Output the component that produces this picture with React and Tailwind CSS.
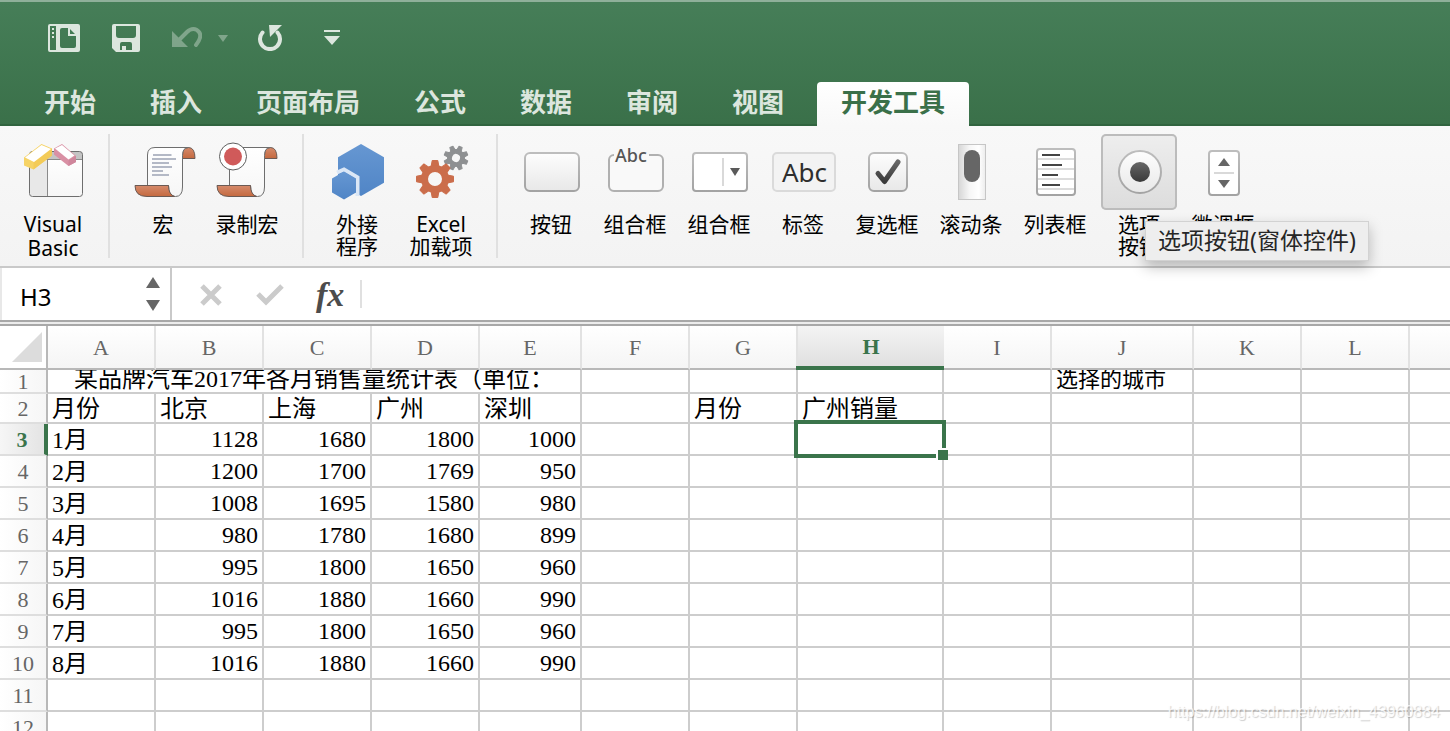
import React, { useState } from 'react';
import clsx from 'clsx';

const SANS = "font-['Noto_Sans','Noto_Sans_CJK_SC',sans-serif]";
const SERIF = "font-['Liberation_Serif','Noto_Sans_CJK_SC',serif]";

const TABS = ['开始', '插入', '页面布局', '公式', '数据', '审阅', '视图', '开发工具'];

const COLUMNS = [
  { name: 'A', width: 'w-[108px]' },
  { name: 'B', width: 'w-[108px]' },
  { name: 'C', width: 'w-[108px]' },
  { name: 'D', width: 'w-[108px]' },
  { name: 'E', width: 'w-[102px]' },
  { name: 'F', width: 'w-[108px]' },
  { name: 'G', width: 'w-[108px]' },
  { name: 'H', width: 'w-[146px]' },
  { name: 'I', width: 'w-[108px]' },
  { name: 'J', width: 'w-[142px]' },
  { name: 'K', width: 'w-[108px]' },
  { name: 'L', width: 'w-[108px]' },
  { name: '', width: 'w-auto' },
];

const ROWS = {
  2: { A: '月份', B: '北京', C: '上海', D: '广州', E: '深圳', G: '月份', H: '广州销量' },
  3: { A: '1月', B: 1128, C: 1680, D: 1800, E: 1000 },
  4: { A: '2月', B: 1200, C: 1700, D: 1769, E: 950 },
  5: { A: '3月', B: 1008, C: 1695, D: 1580, E: 980 },
  6: { A: '4月', B: 980, C: 1780, D: 1680, E: 899 },
  7: { A: '5月', B: 995, C: 1800, D: 1650, E: 960 },
  8: { A: '6月', B: 1016, C: 1880, D: 1660, E: 990 },
  9: { A: '7月', B: 995, C: 1800, D: 1650, E: 960 },
  10: { A: '8月', B: 1016, C: 1880, D: 1660, E: 990 },
  11: {},
  12: {},
};

/* ---------- ribbon icons, all on a 76px canvas ---------- */

const Canvas = ({ children }) => (
  <svg viewBox="0 0 76 76" className="block size-[76px]" fill="none" aria-hidden="true">
    <defs>
      <linearGradient id="face" x1="0" y1="0" x2="0" y2="1">
        <stop offset="0" stopColor="#fdfdfd" />
        <stop offset="1" stopColor="#e8e8e8" />
      </linearGradient>
      <linearGradient id="paper" x1="0" y1="0" x2="0" y2="1">
        <stop offset="0" stopColor="#ffffff" />
        <stop offset="1" stopColor="#f6f6f6" />
      </linearGradient>
      <linearGradient id="rim" x1="0" y1="0" x2="0" y2="1">
        <stop offset="0" stopColor="#bdbdbd" />
        <stop offset="1" stopColor="#a3a3a3" />
      </linearGradient>
      <linearGradient id="ink" x1="0" y1="0" x2="0" y2="1">
        <stop offset="0" stopColor="#666" />
        <stop offset="1" stopColor="#3a3a3a" />
      </linearGradient>
      <linearGradient id="rust" x1="0" y1="0" x2="0" y2="1">
        <stop offset="0" stopColor="#d58a6b" />
        <stop offset="1" stopColor="#c4693f" />
      </linearGradient>
      <linearGradient id="blue" x1="0" y1="0" x2="0" y2="1">
        <stop offset="0" stopColor="#6697d2" />
        <stop offset="1" stopColor="#5085c6" />
      </linearGradient>
      <linearGradient id="track" x1="0" y1="0" x2="1" y2="0">
        <stop offset="0" stopColor="#d6d6d6" />
        <stop offset="0.4" stopColor="#f6f6f6" />
        <stop offset="0.75" stopColor="#fff" />
        <stop offset="1" stopColor="#ececec" />
      </linearGradient>
    </defs>
    {children}
  </svg>
);

const VisualBasicIcon = () => (
  <Canvas>
    <rect x="14.5" y="17.5" width="53" height="45" rx="3" fill="url(#paper)" />
    <path d="M14.5 25.5V20.5a3 3 0 0 1 3-3h47a3 3 0 0 1 3 3v5z" fill="#c4c4c4" />
    <path d="M15 25.5h17.5v36.5H17.5a3 3 0 0 1-2.5-3z" fill="#e8e8e8" />
    <path d="M32.5 25.5v37M14.5 25.5h53" stroke="#8a8a8a" />
    <rect x="14.5" y="17.5" width="53" height="45" rx="3" stroke="#6e6e6e" />
    <path d="M9 23.5 26.5 10 37 14.5v7L18.5 35.5 9 31.5z" fill="#f6d365" />
    <path d="M18.5 28v7.5L37 21.5v-7z" fill="#f3cb58" />
    <path d="M10 23.5 26.5 11 36 15 19 28z" fill="#fff" />
    <path d="M39 14.5 47 10 61 22v6l-7.5 4L39 20.5z" fill="#d990a4" />
    <path d="M53.5 26.5v5.5l7.5-4v-6z" fill="#cf869c" />
    <path d="M40 14.5 47 11l12.5 10.5-6 4z" fill="#fff" />
  </Canvas>
);

const Scroll = () => (
  <>
    <path d="M57.5 24.5V21q0-7.5 6-7.5 6.5 0 6.5 11z" fill="url(#rust)" stroke="#6b5a54" />
    <path
      d="M22.5 52V21q0-7.5 7.5-7.5h33.5q-6 0-6 8V53q0 9.5-7 9.5T43.5 51.5z"
      fill="url(#paper)"
      stroke="#6e6e6e"
    />
    <path d="M10 51.5h33.5q0 9 6 11H22q-12 0-12-11z" fill="url(#rust)" stroke="#6b5a54" />
  </>
);

const MacroIcon = () => (
  <Canvas>
    <Scroll />
    <path d="M28 21h18.5M27 25h24M27 29h17M27 33h20M27 37h11M27 41h17" stroke="#b4b9c6" strokeWidth="2" />
  </Canvas>
);

const RecordMacroIcon = () => (
  <Canvas>
    <g transform="translate(-2 0)">
      <Scroll />
    </g>
    <circle cx="24" cy="22.5" r="13.5" fill="#fff" stroke="#5e5e5e" />
    <circle cx="24" cy="22.5" r="9" fill="#d05a5a" />
  </Canvas>
);

const AddInsIcon = () => (
  <Canvas>
    <path d="m42 10 23 13.3v25.4L42 62 19 48.7V23.3z" fill="url(#blue)" />
    <path d="M18 38.5 25 35.5l13.5 8V62" stroke="#dbe7f6" strokeWidth="4" />
    <path d="m25 37.5 12 7v14l-12 7-12-7v-14z" fill="url(#blue)" />
  </Canvas>
);

const Gear = ({ cx, cy, outer, body, hole, tooth, turn, color }) => (
  <g transform={`translate(${cx} ${cy}) rotate(${turn})`}>
    {[0, 45, 90, 135, 180, 225, 270, 315].map((angle) => (
      <path
        key={angle}
        transform={`rotate(${angle})`}
        d={`M${-tooth} ${-body + 2}L${-tooth * 0.7} ${-outer}H${tooth * 0.7}L${tooth} ${-body + 2}z`}
        fill={color}
        stroke={color}
        strokeLinejoin="round"
      />
    ))}
    <circle r={(body + hole) / 2} stroke={color} strokeWidth={body - hole} />
  </g>
);

const ExcelAddInsIcon = () => (
  <Canvas>
    <Gear cx={53} cy={24} outer={12} body={9} hole={4} tooth={2.4} turn={22.5} color="#8e9092" />
    <Gear cx={32} cy={45} outer={18.5} body={14} hole={7} tooth={4} turn={0} color="#cb6d4b" />
  </Canvas>
);

const ButtonIcon = () => (
  <Canvas>
    <rect x="12" y="19" width="54" height="38" rx="5" fill="url(#face)" stroke="url(#rim)" strokeWidth="2" />
  </Canvas>
);

const GroupBoxIcon = () => (
  <Canvas>
    <rect x="12" y="21" width="54" height="36" rx="5" fill="#f9f9f9" />
    <path d="M17 21a5 5 0 0 0-5 5v26a5 5 0 0 0 5 5h44a5 5 0 0 0 5-5V26a5 5 0 0 0-5-5H52" stroke="#b0b0b0" strokeWidth="2" />
    <text x="18" y="28" className="font-['Noto_Sans',sans-serif] text-[18px] font-medium" fill="#555">Abc</text>
  </Canvas>
);

const ComboBoxIcon = () => (
  <Canvas>
    <rect x="12" y="19" width="54" height="38" rx="3" fill="#fff" stroke="url(#rim)" strokeWidth="2" />
    <path d="M42 24v28" stroke="#d9d9d9" strokeWidth="2" />
    <path d="M49 34h10l-5 8z" fill="#5a5a5a" />
  </Canvas>
);

const LabelIcon = () => (
  <Canvas>
    <rect x="8" y="19" width="62" height="38" rx="4" fill="#f3f3f3" stroke="#dadada" strokeWidth="2" />
    <text x="17" y="48" className="font-['Noto_Sans',sans-serif] text-[26px]" fill="#2e2e2e">Abc</text>
  </Canvas>
);

const CheckBoxIcon = () => (
  <Canvas>
    <rect x="20" y="19" width="38" height="38" rx="5" fill="url(#face)" stroke="url(#rim)" strokeWidth="2" />
    <path d="m29 39.5 6.5 8L49 28" stroke="url(#ink)" strokeWidth="5" strokeLinecap="round" strokeLinejoin="round" />
  </Canvas>
);

const ScrollBarIcon = () => (
  <Canvas>
    <rect x="25.5" y="10.5" width="27" height="55" fill="url(#track)" stroke="#c6c6c6" />
    <rect x="31" y="16" width="16" height="32" rx="8" fill="#666" />
  </Canvas>
);

const ListBoxIcon = () => (
  <Canvas>
    <rect x="20" y="15" width="38" height="46" rx="3" fill="#fff" stroke="url(#rim)" strokeWidth="2" />
    <path d="M21 25h36M21 35h36M21 45h36M21 55h36" stroke="#dcdcdc" strokeWidth="2" />
    <path d="M25 21h18M25 31h20M25 41h16M25 51h18" stroke="#444" strokeWidth="2" />
  </Canvas>
);

const OptionIcon = () => (
  <Canvas>
    <circle cx="39" cy="38" r="21" fill="url(#face)" stroke="url(#rim)" strokeWidth="2" />
    <circle cx="39" cy="38" r="10" fill="url(#ink)" />
  </Canvas>
);

const SpinnerIcon = () => (
  <Canvas>
    <rect x="24" y="17" width="30" height="44" rx="3" fill="#fff" stroke="url(#rim)" strokeWidth="2" />
    <path d="M29 39h20" stroke="#d9d9d9" strokeWidth="2" />
    <path d="m39 24 6 8H33zM39 54l6-8H33z" fill="#666" />
  </Canvas>
);

const GROUPS = [
  [{ label: ['Visual', 'Basic'], Icon: VisualBasicIcon, latin: true }],
  [
    { label: ['宏'], Icon: MacroIcon },
    { label: ['录制宏'], Icon: RecordMacroIcon },
  ],
  [
    { label: ['外接', '程序'], Icon: AddInsIcon },
    { label: ['Excel', '加载项'], Icon: ExcelAddInsIcon },
  ],
  [
    { label: ['按钮'], Icon: ButtonIcon },
    { label: ['组合框'], Icon: GroupBoxIcon },
    { label: ['组合框'], Icon: ComboBoxIcon },
    { label: ['标签'], Icon: LabelIcon },
    { label: ['复选框'], Icon: CheckBoxIcon },
    { label: ['滚动条'], Icon: ScrollBarIcon },
    { label: ['列表框'], Icon: ListBoxIcon },
    { label: ['选项', '按钮'], Icon: OptionIcon, tooltip: '选项按钮(窗体控件)' },
    { label: ['微调框'], Icon: SpinnerIcon },
  ],
];

/* ---------- quick access toolbar ---------- */

const QuickAccess = () => (
  <div className="flex h-[72px] items-center pl-12 text-[#dce6de]">
    <button aria-label="文件库">
      <svg viewBox="0 0 32 28" className="block h-7 w-8" fill="currentColor">
        <path
          fillRule="evenodd"
          d="M2 0h28a2 2 0 0 1 2 2v24a2 2 0 0 1-2 2H2a2 2 0 0 1-2-2V2a2 2 0 0 1 2-2zM2 2v24h6V2zM14 4a2 2 0 0 0-2 2v16a2 2 0 0 0 2 2h12a2 2 0 0 0 2-2V11l-7-7z"
        />
        <path d="M4 4h2v2H4zM4 8h2v2H4zM4 12h2v2H4z" />
        <path d="M20 4v8h8v-2h-6V4z" />
      </svg>
    </button>
    <button aria-label="保存" className="ml-8">
      <svg viewBox="0 0 28 28" className="block size-7" fill="currentColor">
        <path
          fillRule="evenodd"
          d="M2 0h24a2 2 0 0 1 2 2v24a2 2 0 0 1-2 2H4l-4-4V2a2 2 0 0 1 2-2zM4 2v9a3 3 0 0 0 3 3h14a3 3 0 0 0 3-3V2zM10 18a2 2 0 0 0-2 2v6h2v-4h4v4h6v-6a2 2 0 0 0-2-2z"
        />
      </svg>
    </button>
    <button aria-label="撤消" className="ml-8 opacity-40">
      <svg viewBox="0 0 30 22" className="block h-[22px] w-[30px]" fill="none">
        <path d="M0 4v16h16z" fill="currentColor" />
        <path d="m8 12 7-7c4-4 9-4 12 0s1 8-3 13" stroke="currentColor" strokeWidth="4" strokeLinecap="round" />
      </svg>
    </button>
    <button aria-label="撤消列表" className="ml-4 opacity-40">
      <svg viewBox="0 0 10 7" className="block h-[7px] w-[10px]">
        <path d="M0 0h10L5 7z" fill="currentColor" />
      </svg>
    </button>
    <button aria-label="恢复" className="ml-[30px]">
      <svg viewBox="0 0 24 26" className="block h-[26px] w-6" fill="none">
        <path d="M4.5 7.5A10 10 0 1 0 19.5 7.5" stroke="currentColor" strokeWidth="4" strokeLinecap="round" />
        <path d="M11 0h13L12 12z" fill="currentColor" />
      </svg>
    </button>
    <button aria-label="自定义工具栏" className="ml-[42px]">
      <svg viewBox="0 0 16 16" className="block size-4" fill="currentColor">
        <path d="M0 0h16v2H0zM0 6h16l-8 9z" />
      </svg>
    </button>
  </div>
);

const Tabs = ({ active, onSelect }) => (
  <nav className="mt-2 flex flex-1 items-stretch border-b-2 border-[#31643f] pl-[17px]">
    {TABS.map((tab) => (
      <button
        key={tab}
        onClick={() => onSelect(tab)}
        className={clsx(
          'text-[26px] leading-none font-bold',
          tab === active
            ? '-mb-0.5 ml-1.5 rounded-t-[4px] bg-linear-to-b from-white to-[#f8f8f8] px-6 pb-1 text-[#3a7049]'
            : 'px-[27px] pb-0.5 text-[#dce6de]'
        )}
      >
        {tab}
      </button>
    ))}
  </nav>
);

const Tooltip = ({ children }) => (
  <div
    role="tooltip"
    className="absolute top-[87px] left-[48px] z-20 border border-[#d2d2d2] bg-[#eee] px-3 pb-0.5 text-[23px] leading-9 whitespace-nowrap text-[#262626] shadow-[0_6px_14px_rgba(0,0,0,0.25)]"
  >
    {children}
  </div>
);

const RibbonButton = ({ label, Icon, latin, tooltip }) => (
  <div className="relative w-[84px]">
    <button className="flex w-full flex-col items-center text-black">
      <span
        className={clsx(
          'block size-[76px] rounded-[5px]',
          tooltip && 'bg-linear-to-b from-[#eeeeee] to-[#dcdcdc] ring-2 ring-[#bcbcbc] ring-inset'
        )}
      >
        <Icon />
      </span>
      <span className={clsx('text-[21px]', latin ? 'mt-0.5 leading-6' : 'mt-[3px] leading-[22px]')}>
        {label.map((line) => (
          <span key={line} className="block">{line}</span>
        ))}
      </span>
    </button>
    {tooltip && <Tooltip>{tooltip}</Tooltip>}
  </div>
);

const Ribbon = () => (
  <div className="flex h-[142px] border-b-2 border-[#c9c9c9] bg-linear-to-b from-[#f8f8f8] to-[#f3f3f3] pt-2">
    {GROUPS.map((group, i) => (
      <div
        key={i}
        className={clsx(
          'flex h-[124px] shrink-0 pr-[13px] pl-[11px]',
          i < GROUPS.length - 1 && 'border-r-2 border-[#e0e0e0]'
        )}
      >
        {group.map((item, j) => (
          <RibbonButton key={j} {...item} />
        ))}
      </div>
    ))}
  </div>
);

const FormulaBar = () => (
  <div className="flex h-[52px] bg-white">
    <div className="flex w-[172px] items-center justify-between border-r-2 border-[#c9c9c9] pr-[10px]">
      <input
        aria-label="名称框"
        defaultValue="H3"
        className="h-full w-32 border-l-2 border-[#e8e8e8] bg-transparent pt-1 pl-[18px] text-[24px] text-black outline-none"
      />
      <div className="flex flex-col gap-3">
        <button aria-label="上一个">
          <svg viewBox="0 0 14 11" className="block h-[11px] w-[14px]"><path d="M7 0l7 11H0z" fill="#666" /></svg>
        </button>
        <button aria-label="下一个">
          <svg viewBox="0 0 14 11" className="block h-[11px] w-[14px]"><path d="M7 11l7-11H0z" fill="#666" /></svg>
        </button>
      </div>
    </div>
    <div className="flex items-center pt-0.5 pl-7">
      <button aria-label="取消">
        <svg viewBox="0 0 22 22" className="block size-[22px]" fill="none">
          <path d="m2 2 18 18M20 2 2 20" stroke="#cbcbcb" strokeWidth="5" />
        </svg>
      </button>
      <button aria-label="输入" className="ml-[34px]">
        <svg viewBox="0 0 28 22" className="block h-[22px] w-7" fill="none">
          <path d="m2 10 8 8L26 2" stroke="#cbcbcb" strokeWidth="5" />
        </svg>
      </button>
      <button
        aria-label="插入函数"
        className="ml-8 w-7 font-['Liberation_Serif',serif] text-[34px] leading-none font-bold text-[#4c4c4c] italic"
      >
        fx
      </button>
    </div>
    <input
      aria-label="编辑栏"
      className="my-3 ml-4 flex-1 border-l-2 border-[#e0e0e0] px-3 text-[22px] outline-none"
    />
  </div>
);

const Selection = () => (
  <div className="absolute -inset-1 z-10 border-4 border-[#3a744b]">
    <div className="absolute -right-1.5 -bottom-1.5 size-3 border-t-2 border-l-2 border-white bg-[#3a744b]" />
  </div>
);

const RowHeader = ({ row, selected }) => (
  <th
    scope="row"
    className={clsx(
      'border-b-2 border-b-[#dedede] px-0 pt-0.5 pb-0 text-center text-[22px] leading-5',
      selected
        ? 'border-r-4 border-r-[#3a744b] bg-linear-to-r from-[#f6f6f6] to-[#e4e4e4] font-bold text-[#3a744b]'
        : 'border-r-2 border-r-[#b8b8b8] bg-linear-to-r from-white to-[#f6f6f6] font-normal text-[#666]'
    )}
  >
    {row}
  </th>
);

const Cell = ({ value, selected }) => (
  <td
    className={clsx(
      'border-r-2 border-b-2 border-[#cdcdcd] px-1 pb-0 text-[24px] leading-none whitespace-nowrap last:border-r-0',
      typeof value === 'number' ? 'pt-0 text-right' : 'pt-0.5',
      selected && 'relative'
    )}
  >
    {value}
    {selected && <Selection />}
  </td>
);

const Sheet = () => (
  <table className={clsx('w-full table-fixed border-separate border-spacing-0 bg-white text-black', SERIF)}>
    <colgroup>
      <col className="w-12" />
      {COLUMNS.map((col) => (
        <col key={col.name} className={col.width} />
      ))}
    </colgroup>
    <thead>
      <tr className="h-11">
        <td className="border-r-2 border-b-2 border-[#b8b8b8] p-0">
          <svg viewBox="0 0 30 30" className="mr-1 ml-auto block size-[30px]"><path d="M30 0v30H0z" fill="#dcdcdc" /></svg>
        </td>
        {COLUMNS.map((col) => (
          <th
            key={col.name}
            scope="col"
            className={clsx(
              'bg-linear-to-b px-0 pt-0.5 pb-0 text-[22px] leading-none last:border-r-0',
              col.name === 'H'
                ? 'relative border-b-4 border-[#3a744b] from-[#f4f4f4] to-[#e0e0e0] font-bold text-[#3a744b] before:absolute before:-bottom-1 before:-left-0.5 before:h-1 before:w-0.5 before:bg-[#3a744b]'
                : 'border-r-2 border-b-2 border-r-[#e2e2e2] border-b-[#b8b8b8] from-white to-[#f5f5f5] font-normal text-[#666]'
            )}
          >
            {col.name}
          </th>
        ))}
      </tr>
    </thead>
    <tbody>
      <tr className="h-6">
        <RowHeader row={1} />
        <td colSpan={5} className="border-r-2 border-b-2 border-[#cdcdcd] p-0">
          <div className="flex h-[22px] items-end justify-center overflow-hidden text-[24px] leading-[26px] whitespace-nowrap">
            某品牌汽车2017年各月销售量统计表（单位：
          </div>
        </td>
        {COLUMNS.slice(5).map((col) => (
          <td key={col.name} className="border-r-2 border-b-2 border-[#cdcdcd] p-0 last:border-r-0">
            <div className="flex h-[22px] items-end overflow-hidden pl-1 text-[22px] leading-6 whitespace-nowrap">
              {col.name === 'J' && '选择的城市'}
            </div>
          </td>
        ))}
      </tr>
      {Object.entries(ROWS).map(([row, values]) => (
        <tr key={row} className={row === '2' ? 'h-[30px]' : 'h-8'}>
          <RowHeader row={row} selected={row === '3'} />
          {COLUMNS.map((col) => (
            <Cell key={col.name} value={values[col.name]} selected={row === '3' && col.name === 'H'} />
          ))}
        </tr>
      ))}
    </tbody>
  </table>
);

const App = () => {
  const [tab, setTab] = useState('开发工具');

  return (
    <div className={clsx('relative flex h-screen flex-col overflow-hidden bg-white', SANS)}>
      <header className="flex h-[126px] shrink-0 flex-col border-t-2 border-[#8fb09a] bg-linear-to-b from-[#467e58] to-[#3a7049]">
        <QuickAccess />
        <Tabs active={tab} onSelect={setTab} />
      </header>
      <div className="shrink-0">
        <Ribbon />
        <FormulaBar />
        <div className="h-1.5 border-y-2 border-[#a8a8a8] bg-[#ececec]" />
      </div>
      <Sheet />
      <p className="absolute right-2.5 bottom-[7px] z-20 font-['Liberation_Sans',sans-serif] text-[16px] text-white/80 [text-shadow:1px_1px_1px_rgba(0,0,0,0.2)]">
        https://blog.csdn.net/weixin_43960884
      </p>
    </div>
  );
};

export default App;
